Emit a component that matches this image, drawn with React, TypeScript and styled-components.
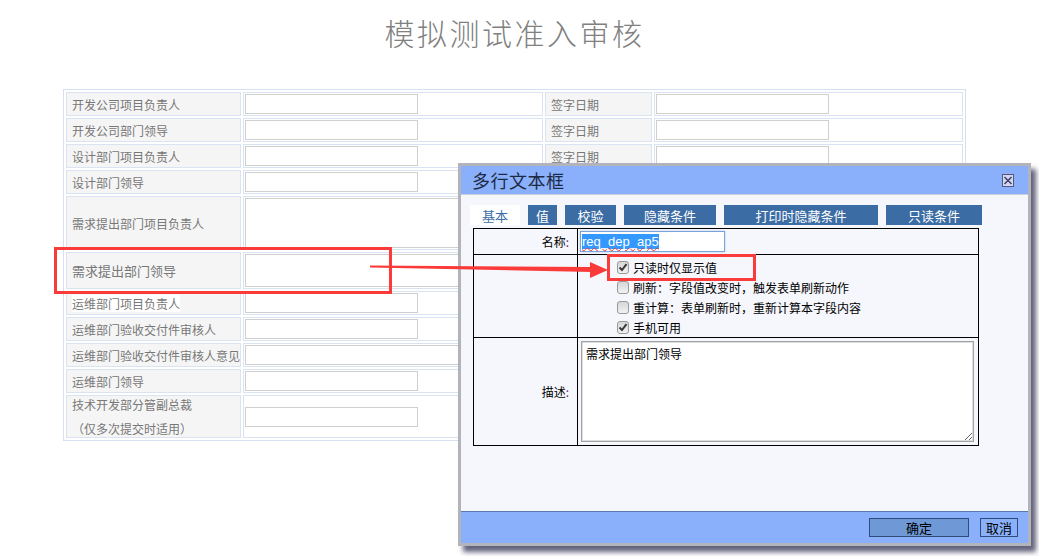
import React from "react";
import styled, { createGlobalStyle } from "styled-components";

const GlobalStyle = createGlobalStyle`
  html, body {
    margin: 0;
    padding: 0;
    background: #fff;
  }
  body {
    font-family: "Noto Sans CJK SC", "Liberation Sans", sans-serif;
  }
`;

const Page = styled.div`
  position: relative;
  width: 1039px;
  height: 556px;
  overflow: hidden;
  background: #fff;
`;

const Title = styled.h1`
  margin: 0;
  padding: 12px 10px 0 0;
  height: 77px;
  font-size: 30px;
  line-height: 40px;
  font-weight: 300;
  letter-spacing: 2.5px;
  color: #808080;
  text-align: center;
`;

/* ---------- background form ---------- */

const FormTable = styled.table`
  margin-left: 63px;
  width: 903px;
  table-layout: fixed;
  border-collapse: separate;
  border-spacing: 2px;
  border: 1px solid #d6e0ef;
  font-size: 12px;
  color: #777;
`;

const LabelCell = styled.td<{ $size?: number }>`
  background: #f5f5f5;
  border: 1px solid #dae3f1;
  padding: 0 0 0 5px;
  font-size: ${(p) => p.$size ?? 12}px;
  line-height: 17px;
  white-space: nowrap;
  overflow: hidden;
  vertical-align: middle;
`;

const ValueCell = styled.td`
  background: #fff;
  border: 1px solid #dae3f1;
  padding: 1px;
  vertical-align: middle;
`;

const TextBox = styled.div<{ $w: number; $h?: number }>`
  width: ${(p) => p.$w}px;
  height: ${(p) => p.$h ?? 20}px;
  box-sizing: border-box;
  border: 1px solid #cfcfcf;
  background: #fff;
`;

const WhiteText = styled.span`
  background: #fff;
`;

const SecondLine = styled.div`
  margin-top: 7px;
`;

/* ---------- dialog ---------- */

const Dialog = styled.div`
  position: absolute;
  left: 458px;
  top: 163px;
  width: 573px;
  height: 383px;
  box-sizing: border-box;
  border: 3px solid #b3b3bb;
  background: #f5f7fc;
  box-shadow: 5px 6px 5px rgba(45, 45, 80, 0.75);
  display: flex;
  flex-direction: column;
  color: #000;
  z-index: 5;
`;

const DialogHeader = styled.div`
  flex: none;
  height: 28px;
  display: flex;
  align-items: center;
  justify-content: space-between;
  padding: 0 14px 0 11px;
  background: #8ab0fc;
  border-bottom: 1px solid #c6cfdf;
`;

const DialogTitle = styled.span`
  font-size: 18px;
  color: #1c2a44;
  letter-spacing: 0.5px;
`;

const DialogBody = styled.div`
  flex: 1;
  padding: 10px 0 0 9px;
`;

const Tabs = styled.div`
  display: flex;
  gap: 8px;
  height: 20px;
`;

const Tab = styled.div<{ $w: number; $active?: boolean }>`
  width: ${(p) => p.$w}px;
  height: 20px;
  display: flex;
  align-items: center;
  justify-content: center;
  font-size: 13px;
  background: ${(p) => (p.$active ? "#fff" : "#3b6ca4")};
  color: ${(p) => (p.$active ? "#3b6ca4" : "#fff")};
`;

const PropTable = styled.table`
  margin: 3px 0 0 3px;
  width: 506px;
  border-collapse: collapse;
  border: 1px solid #000;
  font-size: 12px;
`;

const PropLabel = styled.td`
  width: 104px;
  border: 1px solid #000;
  text-align: right;
  padding: 0 8px 0 0;
  box-sizing: border-box;
  vertical-align: middle;
`;

const PropValue = styled.td<{ $h: number }>`
  height: ${(p) => p.$h}px;
  border: 1px solid #000;
  padding: 0 0 0 2px;
  vertical-align: middle;
`;

const Colon = styled.span`
  color: #7a1f7a;
`;

const NameField = styled.div`
  width: 145px;
  height: 21px;
  box-sizing: border-box;
  border: 1px solid #7ba3d8;
  box-shadow: 0 0 2px #a9c7f0;
  background: #fff;
  padding: 2px 1px;
  font-family: "Liberation Sans", Arial, sans-serif;
  font-size: 13px;
  line-height: 16px;
`;

const Selected = styled.span`
  background: #3399ff;
  color: #fff;
  text-decoration: underline wavy #e23a3a;
  text-decoration-thickness: 1px;
`;

const Options = styled.div`
  padding: 2px 0 0 37px;
`;

const Option = styled.div`
  display: flex;
  align-items: center;
  gap: 4px;
  height: 20px;
  font-size: 12px;
`;

const Check = styled.span`
  width: 12px;
  height: 13px;
  box-sizing: border-box;
  border: 1px solid #9a9a9a;
  border-radius: 3px;
  background: linear-gradient(#d6d6d6, #f2f2f2);
  display: flex;
  align-items: center;
  justify-content: center;
`;

const Describe = styled.textarea`
  display: block;
  width: 393px;
  height: 101px;
  box-sizing: border-box;
  margin: 0 0 0 1px;
  border: 1px solid #a3a3a3;
  box-shadow: inset 0 0 0 1px #dcdcdc;
  padding: 3px 4px;
  font-family: "Noto Sans CJK SC", sans-serif;
  font-size: 12px;
  line-height: 17px;
  color: #000;
  background: #fff;
  resize: both;
  outline: none;
`;

const DialogFooter = styled.div`
  flex: none;
  height: 31px;
  display: flex;
  align-items: center;
  justify-content: flex-end;
  gap: 11px;
  padding-right: 10px;
  background: #8ab0fc;
  border-top: 1px solid #5a77ae;
`;

const FooterButton = styled.div<{ $w: number; $primary?: boolean }>`
  width: ${(p) => p.$w}px;
  height: 19px;
  box-sizing: border-box;
  display: flex;
  align-items: center;
  justify-content: center;
  border: 1px solid #2f4c7c;
  background: ${(p) => (p.$primary ? "#6e98d6" : "#8ab0fc")};
  font-size: 13px;
  color: #000;
`;

/* ---------- annotations ---------- */

const Annotations = styled.svg`
  position: absolute;
  left: 0;
  top: 0;
  width: 1039px;
  height: 556px;
  pointer-events: none;
  z-index: 10;
`;

const CloseIcon = () => (
  <svg width="12" height="13" viewBox="0 0 12 13">
    <rect x="0.5" y="0.5" width="11" height="12" fill="#d3d6f0" stroke="#55587a" />
    <path d="M2.5 3 L9.5 10 M9.5 3 L2.5 10" stroke="#3a3d60" strokeWidth="1.4" />
  </svg>
);

const Tick = () => (
  <svg width="10" height="9" viewBox="0 0 10 9">
    <path d="M1.5 4.5 L4 7 L8.5 1.2" fill="none" stroke="#3a3a3a" strokeWidth="2" />
  </svg>
);

const topRows = [
  { label: "开发公司项目负责人", sign: "签字日期" },
  { label: "开发公司部门领导", sign: "签字日期" },
  { label: "设计部门项目负责人", sign: "签字日期" },
  { label: "设计部门领导", sign: "" },
];

const tabs = [
  { label: "基本", w: 50, active: true },
  { label: "值", w: 29 },
  { label: "校验", w: 51 },
  { label: "隐藏条件", w: 92 },
  { label: "打印时隐藏条件", w: 154 },
  { label: "只读条件", w: 96 },
];

const options = [
  { label: "只读时仅显示值", checked: true },
  { label: "刷新：字段值改变时，触发表单刷新动作" },
  { label: "重计算：表单刷新时，重新计算本字段内容" },
  { label: "手机可用", checked: true },
];

export default function App() {
  return (
    <Page>
      <GlobalStyle />
      <Title>模拟测试准入审核</Title>

      <FormTable>
        <colgroup>
          <col style={{ width: 175 }} />
          <col style={{ width: 300 }} />
          <col style={{ width: 107 }} />
          <col style={{ width: 309 }} />
        </colgroup>
        <tbody>
          {topRows.map((r) => (
            <tr key={r.label}>
              <LabelCell>{r.label}</LabelCell>
              <ValueCell>
                <TextBox $w={173} />
              </ValueCell>
              <LabelCell>{r.sign}</LabelCell>
              <ValueCell>
                <TextBox $w={173} />
              </ValueCell>
            </tr>
          ))}
          <tr>
            <LabelCell>需求提出部门项目负责人</LabelCell>
            <ValueCell colSpan={3}>
              <TextBox $w={420} $h={50} />
            </ValueCell>
          </tr>
          <tr>
            <LabelCell $size={13}>需求提出部门领导</LabelCell>
            <ValueCell colSpan={3}>
              <TextBox $w={420} $h={33} />
            </ValueCell>
          </tr>
          <tr>
            <LabelCell>
              <WhiteText>运维部门项目负责人</WhiteText>
            </LabelCell>
            <ValueCell colSpan={3}>
              <TextBox $w={173} />
            </ValueCell>
          </tr>
          <tr>
            <LabelCell>运维部门验收交付件审核人</LabelCell>
            <ValueCell colSpan={3}>
              <TextBox $w={173} />
            </ValueCell>
          </tr>
          <tr>
            <LabelCell>运维部门验收交付件审核人意见</LabelCell>
            <ValueCell colSpan={3}>
              <TextBox $w={420} />
            </ValueCell>
          </tr>
          <tr>
            <LabelCell>运维部门领导</LabelCell>
            <ValueCell colSpan={3}>
              <TextBox $w={173} />
            </ValueCell>
          </tr>
          <tr>
            <LabelCell>
              技术开发部分管副总裁
              <SecondLine>（仅多次提交时适用）</SecondLine>
            </LabelCell>
            <ValueCell colSpan={3}>
              <TextBox $w={173} />
            </ValueCell>
          </tr>
        </tbody>
      </FormTable>

      <Dialog>
        <DialogHeader>
          <DialogTitle>多行文本框</DialogTitle>
          <CloseIcon />
        </DialogHeader>
        <DialogBody>
          <Tabs>
            {tabs.map((t) => (
              <Tab key={t.label} $w={t.w} $active={t.active}>
                {t.label}
              </Tab>
            ))}
          </Tabs>
          <PropTable>
            <tbody>
              <tr>
                <PropLabel>
                  名称<Colon>:</Colon>
                </PropLabel>
                <PropValue $h={25}>
                  <NameField>
                    <Selected>req_dep_ap5</Selected>
                  </NameField>
                </PropValue>
              </tr>
              <tr>
                <PropLabel />
                <PropValue $h={81}>
                  <Options>
                    {options.map((o) => (
                      <Option key={o.label}>
                        <Check>{o.checked && <Tick />}</Check>
                        {o.label}
                      </Option>
                    ))}
                  </Options>
                </PropValue>
              </tr>
              <tr>
                <PropLabel>
                  描述<Colon>:</Colon>
                </PropLabel>
                <PropValue $h={107}>
                  <Describe readOnly defaultValue="需求提出部门领导" />
                </PropValue>
              </tr>
            </tbody>
          </PropTable>
        </DialogBody>
        <DialogFooter>
          <FooterButton $w={100} $primary>
            确定
          </FooterButton>
          <FooterButton $w={38}>取消</FooterButton>
        </DialogFooter>
      </Dialog>

      <Annotations viewBox="0 0 1039 556">
        <rect x="55.5" y="248.5" width="335" height="44" fill="none" stroke="#fb3a3a" strokeWidth="3" />
        <rect x="608.5" y="255.5" width="146" height="24" fill="none" stroke="#fb3a3a" strokeWidth="3" />
        <polygon points="370,265.5 592,267 592,272 370,267.5" fill="#fb3a3a" />
        <polygon points="590,262 608,270 590,278" fill="#fb3a3a" />
      </Annotations>
    </Page>
  );
}
